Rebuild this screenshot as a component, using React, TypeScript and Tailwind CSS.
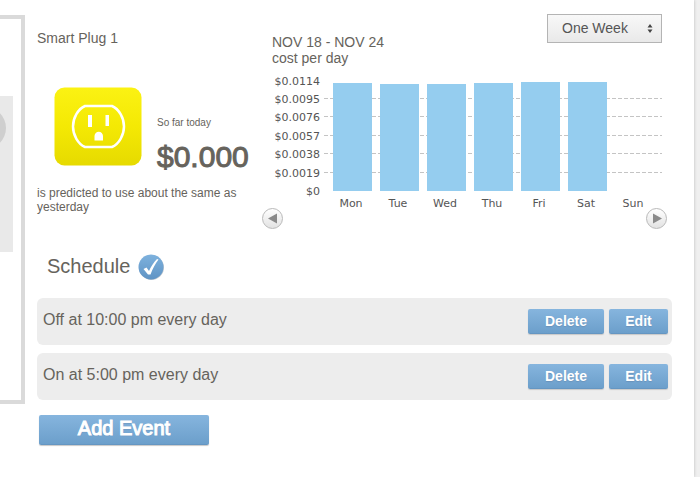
const ticks = [
  { label: '$0.0114', y: 9 },
  { label: '$0.0095', y: 27 },
  { label: '$0.0076', y: 45 },
  { label: '$0.0057', y: 64 },
  { label: '$0.0038', y: 82 },
  { label: '$0.0019', y: 101 },
  { label: '$0', y: 119 },
];

const days = [
  { name: 'Mon', height: 108 },
  { name: 'Tue', height: 107 },
  { name: 'Wed', height: 107 },
  { name: 'Thu', height: 108 },
  { name: 'Fri', height: 109 },
  { name: 'Sat', height: 109 },
  { name: 'Sun', height: 0 },
];

const events = ['Off at 10:00 pm every day', 'On at 5:00 pm every day'];

function OutletIcon() {
  return (
    <svg viewBox="0 0 88 79" className="h-[79px] w-[88px] shrink-0" aria-label="Outlet">
      <defs>
        <linearGradient id="outlet" x1="0" y1="0" x2="0" y2="1">
          <stop offset="0" stopColor="#fbf213" />
          <stop offset="0.5" stopColor="#f4e904" />
          <stop offset="1" stopColor="#e6da00" />
        </linearGradient>
      </defs>
      <rect x="0.5" y="0.5" width="87" height="78" rx="10" fill="url(#outlet)" />
      <path
        d="M31 19H58C65 22 70 31 70 39.500S65 57 58 60H31C24 57 19 48 19 39.500S24 22 31 19Z"
        fill="none"
        stroke="#fff"
        strokeWidth="2.5"
        strokeLinejoin="round"
      />
      <rect x="34" y="28" width="4" height="12" fill="#fff" />
      <rect x="51.500" y="28" width="3.500" height="11" fill="#fff" />
      <path d="M40.500 53.500V49A4.250 4.250 0 0 1 49 49V53.500Z" fill="#fff" />
    </svg>
  );
}

function CostChart() {
  return (
    <svg viewBox="0 0 395 142" className="block w-full" role="img" aria-label="Cost per day">
      {ticks.slice(1, 6).map((t) => (
        <line
          key={t.label}
          x1="52"
          x2="390"
          y1={t.y - 0.5}
          y2={t.y - 0.5}
          stroke="#c4c4c4"
          strokeDasharray="4 2"
        />
      ))}
      <g fill="#555" fontSize="11" fontFamily="'DejaVu Sans', sans-serif">
        {ticks.map((t) => (
          <text key={t.label} x="48" y={t.y + 4} textAnchor="end">
            {t.label}
          </text>
        ))}
        {days.map((d, i) => (
          <g key={d.name}>
            <rect x={61 + i * 47} y={119 - d.height} width="39" height={d.height} fill="#95cdef" />
            <text x={79 + i * 47} y="135" textAnchor="middle">
              {d.name}
            </text>
          </g>
        ))}
      </g>
    </svg>
  );
}

function PagerButton({ label, path }: { label: string; path: string }) {
  return (
    <button
      aria-label={label}
      className="flex size-[21px] items-center justify-center rounded-full border border-[#b9b9b9] bg-linear-to-b from-white to-[#e2e2e2]"
    >
      <svg viewBox="0 0 10 11" className="h-[11px] w-[10px]">
        <path d={path} fill="#8a8a8a" />
      </svg>
    </button>
  );
}

function BlueButton({ children, className }: { children: string; className: string }) {
  return (
    <button
      className={`rounded-xs border-b border-[#6596c2] bg-linear-to-b from-[#86b5de] to-[#6c9fcb] text-white shadow-[0_1px_1px_#c8c8c8] text-shadow-[0_1px_1px_#6a93bb] ${className}`}
    >
      {children}
    </button>
  );
}

function ScheduleCheck() {
  return (
    <svg viewBox="0 0 26 26" className="size-[26px]" aria-hidden="true">
      <defs>
        <linearGradient id="check" x1="0" y1="0" x2="0" y2="1">
          <stop offset="0" stopColor="#7eb2de" />
          <stop offset="1" stopColor="#5f93c4" />
        </linearGradient>
      </defs>
      <circle cx="13.500" cy="13.500" r="12.500" fill="#c3c9cf" />
      <circle cx="13" cy="13" r="12.500" fill="url(#check)" />
      <path d="M5.500 15 8.500 13.500 11 17C13 12.500 15.500 8.500 19 5L20.500 5.500C17 10 14.500 15 12.500 20.500H10Z" fill="#fff" />
    </svg>
  );
}

export default function App() {
  return (
    <div className="bg-[#efefef] pr-[6px] font-['Liberation_Sans',Arial,sans-serif] text-[#66635c]">
      <div className="flex min-h-screen bg-white shadow-[0_0_3px_#bbb]">
        <aside className="mt-[15px] mb-[73px] w-[25px] shrink-0 border-y-4 border-r-4 border-[#dadada] pt-[77px]">
          <div className="h-[156px] w-[13px] overflow-hidden bg-[#e9e9e9] pt-[11px]">
            <div className="-ml-9 size-[42px] rounded-full bg-[#cfcfcf]" />
          </div>
        </aside>

        <main className="min-w-0 flex-1 pr-[22px] pl-3">
          <div className="flex">
            <section className="w-[225px] shrink-0 pt-[30px]">
              <h1 className="text-[14px] leading-4">Smart Plug 1</h1>
              <div className="mt-[41px] flex pl-[17px]">
                <OutletIcon />
                <div className="pt-[30px] pl-[15px]">
                  <p className="text-[10px] leading-3">So far today</p>
                  <p className="mt-[12px] text-[30px] leading-8 [-webkit-text-stroke:1px_#66635c]">$0.000</p>
                </div>
              </div>
              <p className="mt-[13px] text-[12px] leading-[14px]">is predicted to use about the same as yesterday</p>
            </section>

            <section className="min-w-0 flex-1 pt-[14px] pr-[5px]">
              <div className="flex justify-between pr-[5px] pl-[10px]">
                <h2 className="pt-[20px] text-[14px] leading-4">
                  NOV 18 - NOV 24
                  <br />
                  cost per day
                </h2>
                <div className="relative h-[29px] w-[115px]">
                  <select
                    aria-label="Period"
                    className="h-full w-full appearance-none border border-[#b4b4b4] bg-linear-to-b from-[#f8f8f8] to-[#e9e9e9] pl-[14px] text-[14px] text-[#555]"
                  >
                    <option>One Week</option>
                    <option>One Month</option>
                  </select>
                  <div className="pointer-events-none absolute inset-y-0 right-[9px] flex items-center">
                    <svg viewBox="0 0 6 9" className="h-[9px] w-[6px]">
                      <path d="M3 0 5.500 3.500H0.500ZM3 9 0.500 5.500H5.500Z" fill="#444" />
                    </svg>
                  </div>
                </div>
              </div>
              <div className="mt-[6px] pl-[10px]">
                <CostChart />
              </div>
              <div className="-mt-[6px] flex justify-between">
                <PagerButton label="Previous week" path="M0 5.500 9 0.500V10.500Z" />
                <PagerButton label="Next week" path="M10 5.500 1 0.500V10.500Z" />
              </div>
            </section>
          </div>

          <section>
            <label className="mt-[25px] ml-[10px] flex w-fit items-center gap-2">
              <span className="pb-[2px] text-[20px] leading-6">Schedule</span>
              <span className="relative size-[26px]">
                <input type="checkbox" defaultChecked className="absolute inset-0 size-full opacity-0" />
                <ScheduleCheck />
              </span>
            </label>

            <ul className="mt-[18px] flex flex-col gap-2">
              {events.map((event) => (
                <li key={event} className="flex h-[47px] items-center rounded-md bg-[#ededed] pr-1 pl-[6px]">
                  <span className="flex-1 pb-[3px] text-[16px] leading-5">{event}</span>
                  <div className="flex gap-[5px]">
                    <BlueButton className="h-[25px] w-[76px] pt-px text-[14px] font-bold">Delete</BlueButton>
                    <BlueButton className="h-[25px] w-[59px] pt-px text-[14px] font-bold">Edit</BlueButton>
                  </div>
                </li>
              ))}
            </ul>

            <BlueButton className="mt-[15px] ml-[2px] h-[30px] w-[170px] pb-1 text-[20px] leading-6 [-webkit-text-stroke:1px_#fff]">
              Add Event
            </BlueButton>
          </section>
        </main>
      </div>
    </div>
  );
}
